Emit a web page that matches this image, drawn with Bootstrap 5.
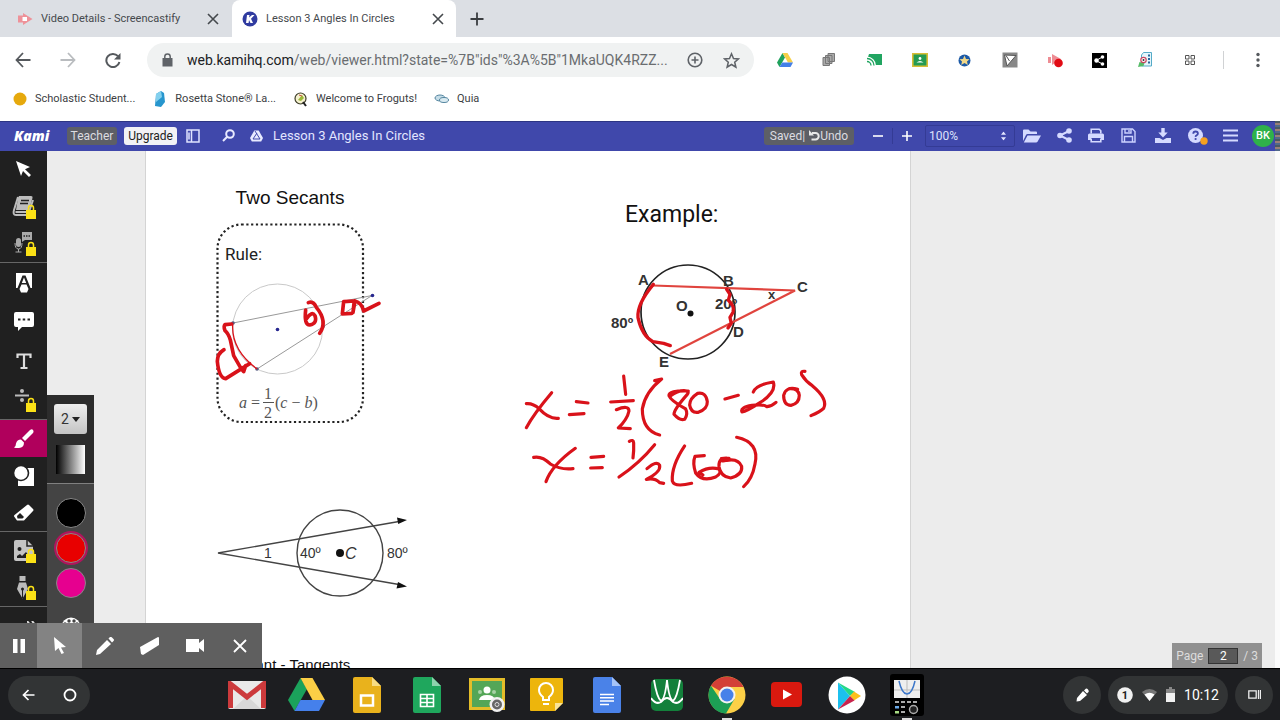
<!DOCTYPE html>
<html lang="en">
<head>
<meta charset="utf-8">
<meta name="viewport" content="width=device-width, initial-scale=1">
<title>Lesson 3 Angles In Circles</title>
<link href="https://cdn.jsdelivr.net/npm/bootstrap@5.3.0/dist/css/bootstrap.min.css" rel="stylesheet">
<style>
  body { font-family: Roboto, "Liberation Sans", sans-serif; font-size: 12px; line-height: 16px; color: #3c4043; background: #fff; }
  svg { display: block; flex: none; }
  button { background: none; border: 0; padding: 0; color: inherit; display: flex; align-items: center; justify-content: center; flex: none; }
  a { color: inherit; text-decoration: none; }
  /* browser frame */
  .tabstrip { background: #dcdfe4; height: 37px; }
  .tab { width: 232px; padding: 0 12px 0 17px; color: #45494d; font-size: 11px; }
  .tab.current { width: 224px; background: #fff; border-radius: 8px 8px 0 0; padding: 0 11px 0 10px; }
  .toolbar { height: 46px; color: #5f6368; }
  .navbtn { width: 45px; height: 34px; }
  .omnibox { height: 34px; border-radius: 17px; background: #f0f2f2; margin: 0 8px 0 12px; padding: 0 14px 0 15px; }
  .address { font-size: 14px; color: #6a6d70; min-width: 0; margin-left: 14px; }
  .address b { font-weight: 400; color: #202124; }
  .vline { width: 1px; height: 18px; background: #d0d2d4; margin: 0 11px; }
  .bookmarks { height: 38px; padding: 0 14px 6px 13px; font-size: 11px; }
  .bookmarks a { gap: 8px; margin-right: 18px; }
  .bookmarks a:nth-child(3) { margin-right: 17px; }
  /* Kami header */
  .kamibar { background: #4048ab; border-top: 1px solid #2d3583; height: 30px; color: #e3e6ff; padding-bottom: 2px; }
  .brand { font: italic 800 14px/20px "Open Sans", sans-serif; color: #fff; width: 53px; padding-left: 14px; }
  .pill { height: 18px; border-radius: 3px; font-size: 12px; background: #5d5f66; color: #dcdce0; }
  .pill.light { background: #f2f2f5; color: #222; }
  .doctitle { font-size: 13px; margin: 0 0 0 10px; line-height: 20px; font-weight: 400; }
  .zoombtn { width: 28px; height: 24px; }
  .zoomsel { width: 90px; height: 22px; border: 1px solid #343b95; border-radius: 2px; background: none; color: #dfe2fb; font-size: 12px; padding: 0 3px; appearance: none; display: block; }
  .icon32 { width: 32px; height: 26px; }
  .icon34 { width: 34px; height: 26px; }
  .avatar { width: 22px; height: 22px; border-radius: 50%; background: #2fb14a; color: #fff; font-size: 11px; font-weight: 500; margin-left: 6px; }
  .edge { width: 5px; height: 30px; margin-left: 1px; background: repeating-linear-gradient(#4a5a62 0 2px, #9a7f77 2px 4px, #51698a 4px 6px); }
  /* viewer */
  .viewer { background: #ececec; min-height: 0; }
  .tools { width: 47px; background: #202020; z-index: 2; }
  .tools button { width: 47px; height: 37px; }
  .tools .tall button { height: 39px; }
  .tools section { border-bottom: 1px solid #666; }
  .tools .picked { background: #b0005c; }
  .options { position: absolute; left: 47px; top: 244px; bottom: 0; width: 47px; background: #444; z-index: 2; overflow: hidden; }
  .options header { background: #2c2c2c; height: 89px; border-bottom: 1px solid #808080; padding-top: 9px; }
  .sizebtn { width: 33px; height: 30px; border-radius: 3px; background: linear-gradient(#eee, #c4c4c4); color: #333; font-size: 14px; gap: 3px; }
  .gradbox { width: 29px; height: 29px; margin-top: 11px; background: linear-gradient(90deg, #000, #fff); }
  .swatches { padding-top: 14px; }
  .swatch { width: 30px; height: 30px; border-radius: 50%; border: 1px solid #888; margin-bottom: 5px; }
  .swatch.on { box-shadow: 0 0 0 2px #b0155c; }
  .sheet { width: 766px; margin-left: 98px; background: #fff; border-left: 1px solid #d4d4d4; border-right: 1px solid #d4d4d4; overflow: hidden; flex: none; font-family: "Liberation Sans", Arial, sans-serif; color: #111; }
  .leftcol { width: 380px; padding: 36px 0 0 69px; }
  .rightcol { padding: 38px 0 0 79px; }
  .docheading { font-size: 19px; line-height: 22px; width: 150px; margin: 0 0 14px; text-align: center; font-weight: 400; }
  .docsub { font-size: 15px; line-height: 18px; width: 150px; margin: 0; text-align: center; white-space: nowrap; font-weight: 400; }
  .hand { font-family: Roboto, "Liberation Sans", sans-serif; }
  .example { font-size: 23px; line-height: 52px; margin: 0 0 18px 20px; font-weight: 400; }
  .ink { position: absolute; left: 0; top: 0; }
  .scroller { width: 5px; background: #fbfbfb; }
  .pager { position: absolute; right: 18px; bottom: 0; height: 25px; background: #909090; color: #ddd; padding: 0 4px; gap: 5px; }
  .pager input { width: 30px; height: 16px; background: #595959; border: 1px solid #333; color: #fff; text-align: center; font-size: 12px; padding: 0; }
  .recorder { position: absolute; left: 0; bottom: 0; height: 45px; background: #5f5f5f; z-index: 3; color: #fff; }
  .recorder button { width: 45px; height: 45px; }
  .recorder button:first-child { width: 37px; }
  .recorder .picked { background: #838383; }
  /* shelf */
  .shelf { background: #1d1e21; border-top: 1px solid #000; height: 52px; color: #fff; padding: 0 7px 0 8px; }
  .chip { background: #323435; height: 38px; border-radius: 19px; }
  .apps { gap: 24px; }
  .apps button { width: 36px; height: 50px; position: relative; }
  .apps .open::after { content: ""; position: absolute; bottom: 0; left: 13px; width: 10px; height: 2px; background: #ddd; }
</style>
</head>
<body class="vh-100 d-flex flex-column overflow-hidden">

<nav class="tabstrip d-flex align-items-center flex-shrink-0" aria-label="Tabs">
  <div class="tab d-flex align-items-center h-100">
    <svg width="16" height="14" viewBox="0 0 16 14"><path d="M1 3.500h5V1l9.500 6L6 13v-2.500H1z" fill="#ee9299"/><path d="M5.500 5h4.500v4H5.500z" fill="#fff"/></svg>
    <span class="ms-2 flex-fill">Video Details - Screencastify</span>
    <button aria-label="Close tab"><svg width="14" height="14" viewBox="0 0 14 14"><path d="M2 2l10 10M12 2L2 12" stroke="#45494d" stroke-width="1.6"/></svg></button>
  </div>
  <div class="tab current d-flex align-items-center h-100">
    <svg width="16" height="16" viewBox="0 0 16 16"><circle cx="8" cy="8" r="7.500" fill="#303ba0"/><path d="M5 4h2.500l-.4 2.500L10 4h2.500L9 7.800l2 4.200H8.500L7 9l-.4 3H4z" fill="#fff"/></svg>
    <span class="ms-2 flex-fill">Lesson 3 Angles In Circles</span>
    <button aria-label="Close tab"><svg width="14" height="14" viewBox="0 0 14 14"><path d="M2 2l10 10M12 2L2 12" stroke="#45494d" stroke-width="1.6"/></svg></button>
  </div>
  <button style="margin-left:14px" aria-label="New tab"><svg width="14" height="14" viewBox="0 0 14 14"><path d="M7 .5v13M.5 7h13" stroke="#3a3d40" stroke-width="1.800"/></svg></button>
</nav>

<div class="toolbar d-flex align-items-center flex-shrink-0">
  <button class="navbtn" aria-label="Back"><svg width="16" height="16" viewBox="0 0 16 16" fill="none" stroke="#55595d" stroke-width="1.800"><path d="M15.500 8H2M8 1L1.500 8 8 15"/></svg></button>
  <button class="navbtn" aria-label="Forward"><svg width="16" height="16" viewBox="0 0 16 16" fill="none" stroke="#b9bcbf" stroke-width="1.800"><path d="M.5 8H14M8 1l6.500 7L8 15"/></svg></button>
  <button class="navbtn" aria-label="Reload"><svg width="16" height="16" viewBox="0 0 16 16"><path d="M13 4.200A6.600 6.600 0 1 0 14.400 10" fill="none" stroke="#55595d" stroke-width="2"/><path d="M15.500 1v6.500H9z" fill="#55595d"/></svg></button>
  <div class="omnibox d-flex align-items-center flex-fill">
    <svg width="11" height="14" viewBox="0 0 11 14"><path d="M.5 5h10v8.500H.5z" fill="#5f6368"/><path d="M2.800 6V3.600a2.700 2.700 0 0 1 5.400 0V6" fill="none" stroke="#5f6368" stroke-width="1.500"/></svg>
    <a href="#" class="address flex-fill text-nowrap"><b>web.kamihq.com</b>/web/viewer.html?state=%7B"ids"%3A%5B"1MkaUQK4RZZ...</a>
    <button class="me-3" aria-label="Zoom"><svg width="16" height="16" viewBox="0 0 16 16" fill="none" stroke="#5f6368" stroke-width="1.600"><circle cx="8" cy="8" r="6.800"/><path d="M8 4.500v7M4.500 8h7"/></svg></button>
    <button class="ms-1" aria-label="Bookmark"><svg width="17" height="17" viewBox="0 0 17 17" fill="none" stroke="#5f6368" stroke-width="1.500"><path d="M8.500 1.800l2 4.700 5 .4-3.800 3.300 1.200 5-4.400-2.700-4.400 2.700 1.200-5L1.500 6.900l5-.4z"/></svg></button>
  </div>
  <button class="navbtn" aria-label="Drive"><svg width="16" height="14" viewBox="0 0 16 14"><path d="M5.500 0L0 9.500 2.500 14 8 4.500z" fill="#1fa25c"/><path d="M5.500 0h5L16 9.500h-5z" fill="#f6cf47"/><path d="M2.500 14L5.200 9.500H16L13.500 14z" fill="#437fe8"/></svg></button>
  <button class="navbtn" aria-label="Copies"><svg width="15" height="14" viewBox="0 0 15 14" fill="#aaa" stroke="#777"><path d="M6 .5h6.500v8H6zM3.500 2.500H10v8H3.500zM1 4.500h6.500v8H1z"/></svg></button>
  <button class="navbtn" aria-label="Cast"><svg width="15" height="12" viewBox="0 0 15 12"><path d="M2 0h13v11H8L1 3z" fill="#21a561"/><path d="M0 4a7.500 7.500 0 0 1 7.500 7.500M0 7a4.500 4.500 0 0 1 4.500 4.500M0 10a2 2 0 0 1 1.500 1.500" fill="none" stroke="#fff" stroke-width="3"/><path d="M0 4.500a7 7 0 0 1 7 7M0 7.500a4 4 0 0 1 4 4" fill="none" stroke="#21a561" stroke-width="1.300"/></svg></button>
  <button class="navbtn" aria-label="Classroom"><svg width="16" height="14" viewBox="0 0 16 14"><path d="M.8.8h14.400v12.400H.8z" fill="#259b52" stroke="#d8bd35" stroke-width="1.600"/><circle cx="8" cy="5.500" r="1.400" fill="#fff"/><path d="M4.500 9.500q3.500-3 7 0z" fill="#fff"/></svg></button>
  <button class="navbtn" aria-label="Star badge"><svg width="13" height="13" viewBox="0 0 13 13"><circle cx="6.500" cy="6.500" r="6" fill="#1c5aa8"/><path d="M6.500 1.500L8 5l3.500.2L9 7.500l.8 3.500-3.300-2-3.300 2L4 7.500 1.500 5.200 5 5z" fill="#f1d889"/></svg></button>
  <button class="navbtn" aria-label="Desmos"><svg width="16" height="16" viewBox="0 0 16 16"><path d="M.5.500h15v15H.5z" fill="#888"/><path d="M2.500 3L14 3.500 5 14z" fill="#fff" stroke="#555"/><path d="M4 3.500l3.500 5.500" stroke="#555"/></svg></button>
  <button class="navbtn" aria-label="Screencastify"><svg width="16" height="15" viewBox="0 0 16 15"><path d="M1 4h3v6H1zM5 1l9 5-9 6z" fill="#ee8d94"/><circle cx="11.500" cy="10" r="4.300" fill="#e10b14"/></svg></button>
  <button class="navbtn" aria-label="Share"><svg width="15" height="15" viewBox="0 0 15 15"><path d="M0 0h15v15H0z" fill="#000"/><path d="M10.500 4L4 7.500l6.500 3.500" stroke="#fff" fill="none"/><circle cx="4.500" cy="7.500" r="2.200" fill="#fff"/><circle cx="10.500" cy="4" r="1.800" fill="#fff"/><circle cx="10.500" cy="11" r="1.800" fill="#fff"/></svg></button>
  <button class="navbtn" aria-label="Read and write"><svg width="16" height="16" viewBox="0 0 16 16"><path d="M6.500.5H14.500V14H4.500V3z" fill="#e5f5fb" stroke="#55abc8"/><path d="M1 15l1.500-5 5 1-1 3z" fill="#55bc68"/><circle cx="6.500" cy="8" r="2.700" fill="#fff" stroke="#c84760" stroke-width="1.200"/><circle cx="6.500" cy="8" r="1" fill="#333"/><path d="M11 3.500h2M11 7h2M11 10.500h2" stroke="#27689c" stroke-width="2"/></svg></button>
  <button class="navbtn" aria-label="Apps"><svg width="12" height="12" viewBox="0 0 12 12" fill="none" stroke="#555"><path d="M1.500 1.500h3.500v3.500h-3.500zM7 1.500h3.500v3.500H7zM1.500 7h3.500v3.500h-3.500zM7 7h3.500v3.500H7z"/></svg></button>
  <div class="vline"></div>
  <button class="navbtn" aria-label="Menu"><svg width="4" height="16" viewBox="0 0 4 16" fill="#55595d"><circle cx="2" cy="2.500" r="1.700"/><circle cx="2" cy="8" r="1.700"/><circle cx="2" cy="13.500" r="1.700"/></svg></button>
</div>

<nav class="bookmarks d-flex align-items-center flex-shrink-0" aria-label="Bookmarks">
  <a href="#" class="d-flex align-items-center"><svg width="14" height="14" viewBox="0 0 14 14"><circle cx="7" cy="7" r="6.500" fill="#e6a90d"/></svg>Scholastic Student...</a>
  <a href="#" class="d-flex align-items-center"><svg width="14" height="16" viewBox="0 0 14 16"><path d="M3 3l5-3 3 2 1 9-4 5-6-1z" fill="#2796ce"/><path d="M3 3l5-3 1 6-6 5z" fill="#83d0ee"/></svg>Rosetta Stone® La...</a>
  <a href="#" class="d-flex align-items-center"><svg width="14" height="15" viewBox="0 0 14 15"><circle cx="6.500" cy="6.500" r="5.500" fill="#f5f1cf" stroke="#3c3c28" stroke-width="1.200"/><path d="M4 8l4-5 2 3-3 3z" fill="#9bb936"/><path d="M5 3l3 1" stroke="#c54"/><path d="M9 10l3 4" stroke="#222" stroke-width="2"/></svg>Welcome to Froguts!</a>
  <a href="#" class="d-flex align-items-center"><svg width="15" height="10" viewBox="0 0 15 10"><ellipse cx="6" cy="4" rx="5" ry="3" fill="#c6dde8" stroke="#5586a0"/><ellipse cx="10" cy="6" rx="4.500" ry="2.500" fill="#d9eaf1" stroke="#5586a0"/></svg>Quia</a>
</nav>

<header class="kamibar d-flex align-items-center flex-shrink-0">
  <div class="brand">Kami</div>
  <button class="pill" style="width:50px;margin-left:14px">Teacher</button>
  <button class="pill light" style="width:53px;margin-left:7px">Upgrade</button>
  <button style="margin-left:9px" aria-label="Panel"><svg width="14" height="14" viewBox="0 0 14 14" fill="none" stroke="#dfe3ff" stroke-width="1.500"><path d="M1 1h12v12H1zM5.500 1v12M3 3.500v7"/></svg></button>
  <button style="margin-left:22px" aria-label="Search"><svg width="13" height="13" viewBox="0 0 13 13" fill="none" stroke="#e8eaff" stroke-width="2"><circle cx="8" cy="5" r="3.800"/><path d="M5.200 7.800L1 12"/></svg></button>
  <svg style="margin-left:15px" width="13" height="12" viewBox="0 0 13 12"><path d="M4.300.5h4.400L13 8l-1.800 3.500H1.800L0 8z" fill="#e8eaff"/><path d="M5 1l5 8H3l4-6" fill="none" stroke="#4048ab"/></svg>
  <h1 class="doctitle">Lesson 3 Angles In Circles</h1>
  <button class="pill ms-auto" style="width:90px"><span>Saved|</span><svg class="ms-1" width="11" height="11" viewBox="0 0 11 11"><path d="M3 3h3.500a3.200 3.200 0 0 1 0 6.400H2.500" fill="none" stroke="#e8e8e8" stroke-width="2"/><path d="M0 0v5.500h5z" fill="#e8e8e8"/></svg><span>Undo</span></button>
  <button class="zoombtn" style="margin-left:10px" aria-label="Zoom out"><svg width="10" height="10" viewBox="0 0 10 10"><path d="M0 5h10" stroke="#fff" stroke-width="1.600"/></svg></button>
  <div style="width:1px;height:16px;background:#343b95"></div>
  <button class="zoombtn" aria-label="Zoom in"><svg width="10" height="10" viewBox="0 0 10 10"><path d="M0 5h10M5 0v10" stroke="#fff" stroke-width="1.600"/></svg></button>
  <div class="position-relative ms-1">
    <select class="zoomsel" aria-label="Zoom level"><option>100%</option></select>
    <svg class="position-absolute top-50 end-0 translate-middle-y me-2 pe-none" width="7" height="9" viewBox="0 0 7 9" fill="#e3e6ff"><path d="M3.500 0L6 3.300H1zM1 5.700h5L3.500 9z"/></svg>
  </div>
  <button class="icon32" style="margin-left:1px" aria-label="Open"><svg width="18" height="14" viewBox="0 0 18 14" fill="#d5daff"><path d="M0 12V1.500Q0 .5 1 .5h4.500l2 2H13q1 0 1 1V5H4.500Q3.500 5 3 6z"/><path d="M4.500 6.500H18l-3.500 6.200q-.4.800-1.500.8H.8z"/></svg></button>
  <button class="icon32" aria-label="Share"><svg width="15" height="15" viewBox="0 0 15 15" fill="#d5daff"><path d="M12 3L3 7.500 12 12" fill="none" stroke="#d5daff" stroke-width="2"/><circle cx="3" cy="7.500" r="2.800"/><circle cx="12" cy="3" r="2.800"/><circle cx="12" cy="12" r="2.800"/></svg></button>
  <button class="icon32" aria-label="Print"><svg width="16" height="15" viewBox="0 0 16 15"><path d="M0 7q0-1.500 1.500-1.500h13Q16 5.500 16 7v5h-3v-2H3v2H0z" fill="#d5daff"/><path d="M3.200 5.500V1.200h8l1.600 1.600v2.700M3.200 10.500v3.300h9.600v-3.300" fill="none" stroke="#d5daff" stroke-width="1.600"/></svg></button>
  <button class="icon32" aria-label="Save"><svg width="15" height="15" viewBox="0 0 15 15" fill="none" stroke="#cbd1ff" stroke-width="1.400"><path d="M1 1h10.500L14 3.500V14H1zM4 1v4h6V1M3.500 14V8.500h8V14M8 2v2"/></svg></button>
  <button class="icon34" style="margin-left:2px" aria-label="Download"><svg width="16" height="15" viewBox="0 0 16 15" fill="#d5daff"><path d="M6.300 0h3.400v4.500h3L8 9.500l-4.700-5h3zM0 10h4.500L8 12l3.500-2H16v5H0z"/></svg></button>
  <button class="icon34" aria-label="Help"><svg width="22" height="19" viewBox="0 0 22 19"><circle cx="9.500" cy="9.500" r="7.500" fill="#d5daff"/><path d="M7.300 7.800q0-2.300 2.300-2.300t2.300 2q0 1-1.200 1.700t-1.100 1.600" fill="none" stroke="#4048ab" stroke-width="1.800"/><circle cx="9.600" cy="13" r="1.100" fill="#4048ab"/><circle cx="18" cy="15" r="3.700" fill="#f5a01f"/></svg></button>
  <button class="icon32" aria-label="Menu"><svg width="15" height="13" viewBox="0 0 15 13"><path d="M0 1.500h15M0 6.500h15M0 11.500h15" stroke="#d5daff" stroke-width="2.200"/></svg></button>
  <button class="avatar">BK</button>
  <div class="edge"></div>
</header>

<main class="viewer d-flex flex-fill position-relative overflow-hidden">
  <aside class="tools d-flex flex-column flex-shrink-0" aria-label="Tools">
    <section>
      <button aria-label="Select"><svg width="16" height="17" viewBox="0 0 16 17"><path d="M0 0l14 6-5 2.200 6 5.800-2 2-6-6L5 15z" fill="#fff"/></svg></button>
      <button aria-label="Dictionary"><svg width="26" height="26" viewBox="0 0 26 26"><path d="M8 2h12q2 0 1.500 2L18 16H5L7 4z" fill="#bdbdbd"/><path d="M7 3L3 16q-1.500 5 2 5h12l5-15" fill="none" stroke="#bdbdbd" stroke-width="2"/><path d="M4.500 18h12" stroke="#bdbdbd" stroke-width="2"/><path d="M10 6.500h8M9 9.500h8" stroke="#222" stroke-width="1.500"/><path d="M15 16h10v9H15z" fill="#fbe116"/><path d="M17.500 16v-2a2.500 2.500 0 0 1 5 0v2" fill="none" stroke="#fbe116" stroke-width="1.500"/></svg></button>
      <button aria-label="Speech"><svg width="26" height="26" viewBox="0 0 26 26"><path d="M11 1h10v8h-7l-3 2z" fill="#aaa"/><path d="M12.500 5h7" stroke="#222" stroke-width="1.300" stroke-dasharray="1.500 1"/><rect x="5" y="7" width="5" height="9" rx="2.500" fill="#aaa"/><path d="M4 12q0 6 3.500 6t3.500-6M7.500 18v3M4.500 21h6" stroke="#aaa" fill="none"/><path d="M15 16h10v9H15z" fill="#fbe116"/><path d="M17.500 16v-2a2.500 2.500 0 0 1 5 0v2" fill="none" stroke="#fbe116" stroke-width="1.500"/></svg></button>
    </section>
    <section class="tall">
      <button aria-label="Markup"><svg width="16" height="20" viewBox="0 0 16 20"><path d="M0 0h16v15h-1.500L9.500 2.500h-3L1.500 15H0z" fill="#fff"/><path d="M5.500 11.500h5L12.500 16l-1.500 3.500H5L3.500 16zM8 4.500l2.200 5.500H5.800z" fill="#fff"/></svg></button>
      <button aria-label="Comment"><svg width="20" height="19" viewBox="0 0 20 19"><path d="M2 0h16q2 0 2 2v11q0 2-2 2H8l-4 4v-4H2q-2 0-2-2V2q0-2 2-2z" fill="#fff"/><path d="M4 7.500h2.500M8.700 7.500h2.500M13.500 7.500H16" stroke="#222" stroke-width="2"/></svg></button>
      <button aria-label="Text box"><svg width="16" height="16" viewBox="0 0 16 16"><path d="M1.500 5V1.500h13V5M8 1v14M4.500 15h7" fill="none" stroke="#ddd" stroke-width="2.200"/></svg></button>
      <button aria-label="Equation"><svg width="26" height="26" viewBox="0 0 26 26"><circle cx="11" cy="4" r="2" fill="#bbb"/><circle cx="11" cy="13" r="2" fill="#bbb"/><path d="M4 8.500h14" stroke="#bbb" stroke-width="2"/><path d="M15 16h10v9H15z" fill="#fbe116"/><path d="M17.500 16v-2a2.500 2.500 0 0 1 5 0v2" fill="none" stroke="#fbe116" stroke-width="1.500"/></svg></button>
    </section>
    <section>
      <button class="picked" aria-label="Drawing"><svg width="20" height="20" viewBox="0 0 20 20" fill="#fff"><path d="M8 9l8-8q2-1.500 3 0t0 3l-8 8z"/><path d="M7 10.500l3 3q0 5-5 5.500-3 .3-5-.5 2-1 2-4 1-4 5-4z"/></svg></button>
      <button aria-label="Shapes"><svg width="22" height="22" viewBox="0 0 22 22"><path d="M5 3h16v18H5z" fill="#fff"/><circle cx="8" cy="8" r="7.500" fill="#fff" stroke="#202020" stroke-width="1.600"/></svg></button>
      <button aria-label="Eraser"><svg width="20" height="18" viewBox="0 0 20 18"><path d="M13 1q1-1 2 0l4 4q1 1 0 2l-9 9.500H3L.5 13q-1-1 0-2z" fill="#fff"/><path d="M3 12l3-3 4 4-1.500 1.500h-5z" fill="#202020"/></svg></button>
    </section>
    <section>
      <button aria-label="Image"><svg width="26" height="26" viewBox="0 0 26 26"><path d="M5 2h11l6 6v13q0 2-2 2H5q-2 0-2-2V4q0-2 2-2z" fill="#c4c4c4"/><path d="M16 2v6h6" fill="none" stroke="#202020" stroke-width="1.500"/><circle cx="8.500" cy="11" r="2" fill="#202020"/><path d="M6 20v-2l3-2 2 2 4-4 3 4v2z" fill="#202020"/><path d="M15 16h10v9H15z" fill="#fbe116"/><path d="M17.500 16v-2a2.500 2.500 0 0 1 5 0v2" fill="none" stroke="#fbe116" stroke-width="1.500"/></svg></button>
      <button aria-label="Signature"><svg width="26" height="26" viewBox="0 0 26 26"><path d="M8.500 1h6v5h-6zM8 7.500h7l2 6.500-5.500 9.500L6 14z" fill="#bbb"/><path d="M11.500 23v-8" stroke="#202020"/><circle cx="11.500" cy="14" r="1.500" fill="#202020"/><path d="M15 16h10v9H15z" fill="#fbe116"/><path d="M17.500 16v-2a2.500 2.500 0 0 1 5 0v2" fill="none" stroke="#fbe116" stroke-width="1.500"/></svg></button>
    </section>
    <button aria-label="More"><svg class="ms-3" width="10" height="10" viewBox="0 0 10 10"><path d="M0 0l4 5-4 5M5 0l4 5-4 5" fill="none" stroke="#ddd" stroke-width="2"/></svg></button>
  </aside>

  <div class="options">
    <header class="d-flex flex-column align-items-center">
      <button class="sizebtn">2<svg width="8" height="5" viewBox="0 0 8 5"><path d="M0 0h8L4 5z" fill="#222"/></svg></button>
      <div class="gradbox"></div>
    </header>
    <div class="swatches d-flex flex-column align-items-center">
      <button class="swatch" style="background:#000" aria-label="Black"></button>
      <button class="swatch on" style="background:#e80000" aria-label="Red"></button>
      <button class="swatch" style="background:#e6008f" aria-label="Pink"></button>
      <svg style="margin-top:14px" width="20" height="20" viewBox="0 0 20 20"><circle cx="10" cy="10" r="9.500" fill="#fff"/><g fill="#444"><circle cx="4" cy="7" r="1.700"/><circle cx="8" cy="4" r="1.700"/><circle cx="13" cy="4" r="1.700"/><circle cx="16" cy="7" r="1.700"/></g></svg>
    </div>
  </div>

  <article class="sheet d-flex position-relative">
    <div class="leftcol flex-shrink-0">
      <h2 class="docheading text-nowrap">Two Secants</h2>
      <svg width="150" height="202" viewBox="215 223 150 202" overflow="visible">
        <rect x="217.500" y="224.500" width="145.500" height="197.500" rx="24" fill="none" stroke="#222" stroke-width="2.200" stroke-dasharray="2.200 2.600"/>
        <text class="hand" x="225" y="260" font-size="17" fill="#222">Rule:</text>
        <circle cx="277.500" cy="329" r="45" fill="none" stroke="#c9c9c9"/>
        <path d="M233 323L372 295.500 257 369" fill="none" stroke="#999"/>
        <g fill="#27278f"><circle cx="277.500" cy="329.500" r="1.800"/><circle cx="372.500" cy="295.500" r="1.800"/></g>
        <g fill="#555a80"><circle cx="233" cy="323" r="1.800"/><circle cx="257" cy="369" r="1.800"/><circle cx="323" cy="326.500" r="1.800"/></g>
        <g font-family="Liberation Serif, serif" font-size="16" fill="#555">
          <text x="239" y="408" font-style="italic">a</text><text x="251" y="408">=</text>
          <text x="264" y="399">1</text><text x="264" y="418">2</text>
          <text x="275" y="408">(<tspan font-style="italic">c</tspan> − <tspan font-style="italic">b</tspan>)</text>
        </g>
        <path d="M263 402.500h11" stroke="#555"/>
      </svg>
      <svg style="margin-top:83px" width="195" height="92" viewBox="215 508 195 92" overflow="visible">
        <circle cx="340" cy="553" r="43" fill="none" stroke="#444" stroke-width="1.400"/>
        <path d="M399 521.500L218 553l181 31.500" fill="none" stroke="#444" stroke-width="1.300"/>
        <path d="M407 520l-10-2.500 1.200 6.500zM407 586.500l-9-4.500-1.500 6.500z" fill="#111"/>
        <circle cx="340" cy="553" r="4" fill="#111"/>
        <g font-size="14" fill="#333"><text x="264" y="558">1</text><text x="300" y="558">40º</text><text x="387" y="558">80º</text></g>
        <text x="345" y="559" font-size="16" font-style="italic" fill="#333">C</text>
      </svg>
      <h3 class="docsub" style="margin-top:56px">Secant - Tangents</h3>
    </div>
    <div class="rightcol">
      <h2 class="example hand">Example:</h2>
      <svg width="210" height="112" viewBox="605 259 210 112" overflow="visible">
        <circle cx="688" cy="312" r="47" fill="none" stroke="#222" stroke-width="1.700"/>
        <path d="M653 285.500L795 290.500 670 354" fill="none" stroke="#e0443e" stroke-width="2.200"/>
        <circle cx="690.500" cy="313.500" r="3" fill="#111"/>
        <g font-size="15" font-weight="700" fill="#333">
          <text x="638" y="285">A</text><text x="723" y="286">B</text><text x="797" y="292">C</text><text x="733" y="337">D</text><text x="659" y="367">E</text>
          <text x="676" y="311">O</text><text x="768" y="299" font-size="13">x</text><text x="611" y="328">80º</text><text x="715" y="309">20º</text>
        </g>
      </svg>
    </div>
    <svg class="ink pe-none" width="764" height="517" viewBox="146 151 764 517" fill="none" stroke="#d9121a" stroke-linecap="round" stroke-linejoin="round" role="img" aria-label="Pen strokes: x = 1/2(80 - 20), x = 1/2(60)">
      <g transform="translate(199 180) scale(.3333)" stroke-width="11">
        <path d="M98 432l-20 2q-5 5 0 18 10 8 16 28l10 47 22 38 8 10 6-18M75 509q-20 12-20 35 5 50 25 52l72-45"/>
        <path d="M101 435q-3 75 72 131" stroke-width="4"/>
        <path d="M328 368q15-6 24 14 35 42 10 78M320 390q-5 45 12 45 24-5 16-28-10-15-25 9"/>
        <path d="M458 400l-28 2 4-37 32-2-4 34 6-34q20 5 26 30l46-23"/>
      </g>
      <g transform="translate(499 180) scale(.3333)" stroke-width="10">
        <path d="M463 313q-50 60-46 100 12 55 45 72l32 5 20 7"/>
        <path d="M683 328l10 15-5 18q20 18 14 36l-9 15 4 18-10 14"/>
      </g>
      <g transform="translate(499 360) scale(.3333)" stroke-width="9.500">
        <path d="M82 131q20-2 38 15 30 32 58 29M158 98q-55 65-76 105"/>
        <path d="M232 125l35 4M211 164l44-3"/>
        <path d="M374 48l6 55M335 126l68-4M352 149q38-15 38 4-5 25-32 51l36 2"/>
        <path d="M467 62l21-5q-50 40-58 90 0 65 52 78"/>
        <path d="M568 93q-60-2-58 14 5 14 50 40 8 15-3 31-15 5-32-15 0-15 40-60 8-10-10-11-20 0-40 15M596 100q-24 15-24 35 4 25 26 22 28-10 27-32-4-30-29-25"/>
        <path d="M678 117l40-11M763 96q8-22 60-30 10 30-40 62-40 26-54 28-6-14 30-20 35-4 45 4 15-2 27-13"/>
        <path d="M896 88q-35-10-42 18 0 30 22 30 25-5 25-30-3-22-30-20M918 34q-14-2-10 10 12 20 32 33 48 40 34 68-10 10-38 22"/>
        <path d="M104 292q25-5 50 20 30 18 68 14M229 265q-70 50-88 100"/>
        <path d="M276 292l38-3M275 324l35-1"/>
        <path d="M391 244q12-7 13 5 1 22-2 45M467 254q-45 55-107 97M444 326q30-26 38-10 4 20-40 42 26-5 40 10l12 2"/>
        <path d="M557 258q-40 60-37 105 5 20 58 7"/>
        <path d="M616 287l-28 2q-8 20 2 50 20 28 60 12 20-12 10-24-30-8-60 10l12 8"/>
        <path d="M690 295q-32-5-30 25 5 30 35 34 36-10 33-35-10-25-45-18-20 5-16-5l15-2M713 232q70 15 55 80-8 45-34 68"/>
      </g>
    </svg>
  </article>

  <div class="scroller ms-auto h-100"></div>
  <form class="pager d-flex align-items-center"><label for="pg">Page</label><input id="pg" value="2"><span>/ 3</span></form>

  <div class="recorder d-flex" role="toolbar" aria-label="Recorder">
    <button aria-label="Pause"><svg width="12" height="14" viewBox="0 0 12 14"><path d="M0 0h4.500v14H0zM7.500 0H12v14H7.500z" fill="#fff"/></svg></button>
    <button class="picked" aria-label="Pointer"><svg width="12" height="17" viewBox="0 0 12 17"><path d="M0 0l12 10-5 .5L10 16l-2.500 1-3-6L1 14z" fill="#fff"/></svg></button>
    <button aria-label="Pen"><svg width="18" height="18" viewBox="0 0 18 18" fill="#fff"><path d="M11 3l4 4L4 17l-4 1 1-5zM12.500 1.500L14 0q1-.5 2 .5l1.500 1.500q1 1 0 2L16 5.500z"/></svg></button>
    <button aria-label="Eraser"><svg width="20" height="18" viewBox="0 0 20 18"><path d="M0 10L18 0q1 0 1 1v7L3 18l-2-1z" fill="#fff"/></svg></button>
    <button aria-label="Camera"><svg width="18" height="13" viewBox="0 0 18 13"><path d="M0 0h13v4l5-4v13l-5-4v4H0z" fill="#fff"/></svg></button>
    <button aria-label="Close"><svg width="14" height="14" viewBox="0 0 14 14"><path d="M1 1l12 12M13 1L1 13" stroke="#fff" stroke-width="1.800"/></svg></button>
  </div>
</main>

<footer class="shelf d-flex align-items-center flex-shrink-0">
  <div class="chip d-flex align-items-center justify-content-between px-2" style="width:82px">
    <button style="width:24px" aria-label="Back"><svg width="13" height="12" viewBox="0 0 13 12" fill="none" stroke="#fff" stroke-width="1.700"><path d="M12.500 6H2M6.500 1L1.500 6l5 5"/></svg></button>
    <button style="width:24px" aria-label="Launcher"><svg width="14" height="14" viewBox="0 0 14 14"><circle cx="7" cy="7" r="5.500" fill="none" stroke="#fff" stroke-width="1.800"/></svg></button>
  </div>
  <div class="apps d-flex align-items-center justify-content-center flex-fill">
    <button aria-label="Gmail"><svg width="38" height="28" viewBox="0 0 38 28"><rect width="38" height="28" rx="2" fill="#e9e9e9"/><path d="M5 28l14-13 14 13z" fill="#d8d8d8"/><path d="M2.500 27V3L19 16 35.500 3v24" fill="none" stroke="#cc3a3c" stroke-width="5"/></svg></button>
    <button aria-label="Drive"><svg width="37" height="33" viewBox="0 0 37 33"><path d="M12.500 0L0 22l6.500 11L19 11z" fill="#1ba25b"/><path d="M12.500 0h12L37 22H24.500z" fill="#fccf46"/><path d="M6.500 33l6-11H37l-6 11z" fill="#4580eb"/></svg></button>
    <button aria-label="Slides"><svg width="28" height="36" viewBox="0 0 28 36"><path d="M2 0h17l9 9v25q0 2-2 2H2q-2 0-2-2V2q0-2 2-2z" fill="#e9b21c"/><path d="M19 0l9 9h-9z" fill="#f8dd83"/><path d="M8 18.500h12v10H8z" fill="#e9b21c" stroke="#fff" stroke-width="2.500"/></svg></button>
    <button aria-label="Sheets"><svg width="28" height="36" viewBox="0 0 28 36"><path d="M2 0h17l9 9v25q0 2-2 2H2q-2 0-2-2V2q0-2 2-2z" fill="#1fa75d"/><path d="M19 0l9 9h-9z" fill="#8ed3ae"/><path d="M7.500 17.500h13v12h-13zM7.500 21.500h13M7.500 25.500h13M14 17.500v12" fill="none" stroke="#fff" stroke-width="1.600"/></svg></button>
    <button aria-label="Classroom"><svg width="36" height="34" viewBox="0 0 36 34"><path d="M1.500 1.500h33v29h-33z" fill="#54a657" stroke="#e4bd29" stroke-width="3"/><g fill="#fff"><circle cx="18" cy="12" r="3.500"/><path d="M10 22q1-5 8-5t8 5z"/></g><g fill="#a6d1a5"><circle cx="11" cy="14" r="2"/><circle cx="25" cy="14" r="2"/></g><circle cx="28" cy="26.500" r="7.500" fill="#f1f1f1"/><circle cx="28" cy="26.500" r="5" fill="#666"/><circle cx="28" cy="26.500" r="2" fill="#666" stroke="#ddd"/></svg></button>
    <button aria-label="Keep"><svg width="33" height="33" viewBox="0 0 33 33"><path d="M1 0h31q1 0 1 1v24l-8 8H1q-1 0-1-1V1q0-1 1-1z" fill="#edb50c"/><path d="M33 25l-8 8v-8z" fill="#fae49a"/><path d="M13 22v-3q-4-3-4-7a7 7 0 0 1 14 0q0 4-4 7v3zM13 26h6" fill="none" stroke="#fff" stroke-width="2"/></svg></button>
    <button aria-label="Docs"><svg width="28" height="36" viewBox="0 0 28 36"><path d="M2 0h17l9 9v25q0 2-2 2H2q-2 0-2-2V2q0-2 2-2z" fill="#4a82e8"/><path d="M19 0l9 9h-9z" fill="#a5c3f7"/><path d="M7 17.500h14M7 20.800h14M7 24.100h14M7 27.400h9" stroke="#fff" stroke-width="1.500"/></svg></button>
    <button aria-label="Graphing"><svg width="32" height="32" viewBox="0 0 32 32"><rect width="32" height="32" rx="5" fill="#13803b"/><path d="M3 1q3 18 7 21Q14 20 16 1q2 19 6 21 4-3 7-21" fill="none" stroke="#fff" stroke-width="1.800"/><path d="M0 19q5 7 10 4 3-4 6-4t6 4q5 3 10-4" fill="none" stroke="#fff" stroke-width="2"/></svg></button>
    <button class="open" aria-label="Chrome"><svg width="38" height="38" viewBox="0 0 38 38"><circle cx="19" cy="19" r="18.500" fill="#fcd047"/><path d="M19 19L3 9.700A18.500 18.500 0 0 1 35.500 11H19z" fill="#d33f37"/><path d="M3 9.700A18.500 18.500 0 0 0 18 37.500L26.500 23 19 19 12 23z" fill="#1d9f55"/><path d="M35.500 11H19v8l7.500 4z" fill="#fcd047"/><circle cx="19" cy="19" r="8.500" fill="#f2f2f2"/><circle cx="19" cy="19" r="6.500" fill="#4681e9"/></svg></button>
    <button aria-label="YouTube"><svg width="31" height="25" viewBox="0 0 31 25"><rect width="31" height="25" rx="4" fill="#d9190f"/><path d="M12 7.500l9 5-9 5z" fill="#fff"/></svg></button>
    <button aria-label="Play Store"><svg width="38" height="38" viewBox="0 0 38 38"><circle cx="19" cy="19" r="18.500" fill="#fff"/><path d="M10 6.500v27L22 20z" fill="#1cc0ee"/><path d="M10 6.500L27 16l-5 4z" fill="#23d889"/><path d="M26 15.500l7 4.500-7 4.500-4-4.500z" fill="#fbc01c"/><path d="M10 33.500L22 20l4.500 4.500z" fill="#c9244e"/></svg></button>
    <button class="open" aria-label="Calculator"><svg width="34" height="42" viewBox="0 0 34 42"><rect width="34" height="42" rx="3" fill="#000"/><path d="M4 6h26v18H4z" fill="#eee"/><path d="M17 6v18M4 16h26" stroke="#bbb"/><path d="M9 7q3 13 8 13t8-13" fill="none" stroke="#3b76c9" stroke-width="1.500"/><g fill="#aaa"><path d="M5 27h4v2H5zM11 27h4v2h-4zM17 27h4v2h-4zM23 27h4v2h-4zM11 32h4v2h-4zM11 37h4v2h-4z"/></g><path d="M5 32h4v2.500H5z" fill="#69a9e8"/><path d="M5 37h4v2.500H5z" fill="#a7db83"/><circle cx="23.500" cy="35.500" r="4" fill="#222" stroke="#aaa" stroke-width="1.500"/><path d="M-13 12v20" stroke="#444"/></svg></button>
  </div>
  <button class="chip" style="width:38px" aria-label="Stylus"><svg width="13" height="14" viewBox="0 0 13 14"><path d="M7 3l4 4-7 6-3.500.5L1 10zM9 1.500q1.500-2 3 0t0 3l-1 1-3-3z" fill="#fff"/></svg></button>
  <button class="chip" style="width:120px;margin-left:7px;gap:9px">
    <svg width="16" height="16" viewBox="0 0 16 16"><circle cx="8" cy="8" r="7.800" fill="#f1f1f1"/><text x="8" y="12" text-anchor="middle" font-size="11" font-weight="700" fill="#222">1</text></svg>
    <svg width="15" height="12" viewBox="0 0 15 12"><path d="M0 3q7.500-6 15 0L7.500 12z" fill="#777"/><path d="M2.500 5.500q5-3.500 10 0L7.500 12z" fill="#fff"/></svg>
    <svg width="9" height="15" viewBox="0 0 9 15"><path d="M3 0h3v2h3v4H0V2h3z" fill="#888"/><path d="M0 6h9v9H0z" fill="#f1f1f1"/></svg>
    <span style="font-size:14px">10:12</span>
  </button>
  <button class="chip" style="width:38px;margin-left:7px" aria-label="Overview"><svg width="13" height="9" viewBox="0 0 13 9"><path d="M.8.8h7.400v7.400H.8zM10.500 0v9M12.500 0v9" fill="none" stroke="#eee" stroke-width="1.300"/></svg></button>
</footer>

<script src="https://cdn.jsdelivr.net/npm/bootstrap@5.3.0/dist/js/bootstrap.bundle.min.js"></script>
</body>
</html>
